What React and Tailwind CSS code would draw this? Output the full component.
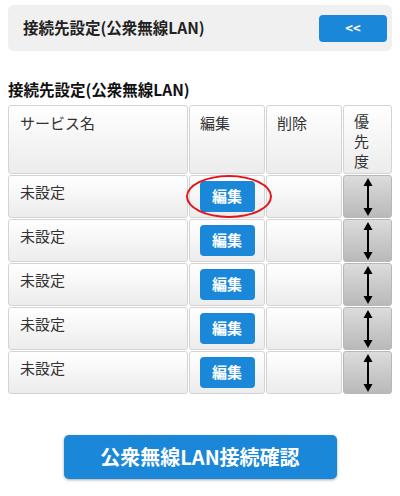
import React from "react";

const font = { fontFamily: '"Noto Sans CJK JP", "Noto Sans", sans-serif' };

function Arrow() {
  return (
    <svg width="12" height="38" viewBox="0 0 12 38">
      <line x1="6" y1="6" x2="6" y2="32" stroke="#000" strokeWidth="2" />
      <polygon points="6,0 1.5,8 10.5,8" fill="#000" />
      <polygon points="6,38 1.5,30 10.5,30" fill="#000" />
    </svg>
  );
}

const cell =
  "rounded-[3px] border border-[#d4d4d4] bg-gradient-to-b from-[#ffffff] to-[#ececec]";

export default function App() {
  const rows = [0, 1, 2, 3, 4];
  return (
    <div className="w-[400px] h-[496px] bg-white text-[#333]" style={font}>
      <div className="px-2 pt-[5px]">
        <div className="h-[46px] rounded-[6px] bg-[#f0f0f0] flex items-center justify-between pl-[15px] pr-[5px]">
          <span className="text-[15.5px] font-bold text-[#222]">接続先設定(公衆無線LAN)</span>
          <button className="w-[68px] h-[27px] rounded-[4px] bg-[#1a87d9] text-white text-[13px] font-bold flex items-center justify-center">
            &lt;&lt;
          </button>
        </div>
        <div className="mt-[28px] text-[15.5px] font-bold text-[#111] leading-[20px]">
          接続先設定(公衆無線LAN)
        </div>
        <div className="mt-[6px] grid grid-cols-[180px_76px_76px_49px] gap-[1px] text-[15px]">
          <div className={`${cell} h-[69px] pl-[11px] pt-[8px] leading-[18px]`}>サービス名</div>
          <div className={`${cell} h-[69px] pl-[10px] pt-[8px] leading-[18px]`}>編集</div>
          <div className={`${cell} h-[69px] pl-[10px] pt-[8px] leading-[18px]`}>削除</div>
          <div className={`${cell} h-[69px] pl-[10px] pt-[5px] leading-[20px]`}>
            優<br />先<br />度
          </div>
          {rows.map((i) => (
            <React.Fragment key={i}>
              <div className={`${cell} h-[43px] pl-[11px] pt-[5px]`}>未設定</div>
              <div className={`${cell} h-[43px] flex items-center justify-center relative`}>
                <button className="w-[55px] h-[31px] rounded-[4px] bg-[#1a87d9] text-white font-bold text-[15px] flex items-center justify-center">
                  編集
                </button>
                {i === 0 && (
                  <div className="absolute left-[-4px] top-[-1px] w-[86px] h-[43px] rounded-[50%] border-2 border-[#e3141b] pointer-events-none" />
                )}
              </div>
              <div className={`${cell} h-[43px]`}></div>
              <div className="h-[43px] rounded-[3px] border border-[#b8b8b8] bg-gradient-to-b from-[#dcdcdc] to-[#b9b9b9] flex items-center justify-center">
                <Arrow />
              </div>
            </React.Fragment>
          ))}
        </div>
        <div className="mt-[41px] flex justify-center">
          <button className="w-[273px] h-[44px] rounded-[5px] bg-[#1a87d9] text-white text-[20px] font-bold shadow-[0_1px_3px_rgba(0,0,0,0.35)] flex items-center justify-center">
            公衆無線LAN接続確認
          </button>
        </div>
      </div>
    </div>
  );
}
